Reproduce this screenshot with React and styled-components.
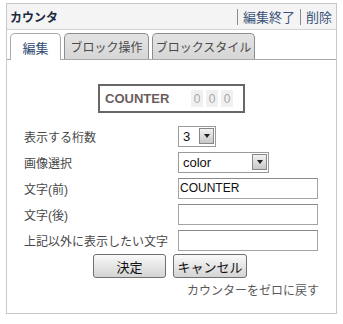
import React from "react";
import styled, { createGlobalStyle } from "styled-components";

const GlobalStyle = createGlobalStyle`
  body {
    margin: 0;
    background: #fff;
    font-family: "Liberation Sans", "Noto Sans CJK JP", sans-serif;
  }
`;

const Block = styled.div`
  margin: 3px 0 0 6px;
  width: 331px;
  height: 311px;
  box-sizing: border-box;
  border: 1px solid #c8c8c8;
  background: #fff;
  display: flex;
  flex-direction: column;
`;

const Header = styled.div`
  height: 26px;
  box-sizing: border-box;
  background: #f4f4f4;
  border-bottom: 1px solid #d4d4d4;
  display: flex;
  align-items: center;
  justify-content: space-between;
  padding: 0 4px 0 3px;
`;

const Title = styled.div`
  font-size: 12px;
  font-weight: bold;
  color: #1a2a40;
`;

const Links = styled.div`
  display: flex;
  align-items: center;
  font-size: 13px;
  color: #3a5378;
`;

const Sep = styled.span`
  display: inline-block;
  width: 1px;
  height: 16px;
  background: #8a8a8a;
  margin: 0 5px;
`;

const TabBar = styled.div`
  display: flex;
  align-items: flex-end;
  gap: 3px;
  margin-top: 3px;
  padding-left: 3px;
  height: 26px;
  border-bottom: 1px solid #a8a8a8;
`;

const Tab = styled.div`
  width: ${(p) => p.$w}px;
  height: ${(p) => (p.$active ? "27px" : "26px")};
  box-sizing: border-box;
  border: 1px solid ${(p) => (p.$active ? "#aaa" : "#8e8e8e")};
  border-bottom: none;
  border-radius: 5px 5px 0 0;
  background: ${(p) => (p.$active ? "#fff" : "linear-gradient(#e4e4e4, #d6d6d6)")};
  color: ${(p) => (p.$active ? "#2f4a70" : "#4a4a4a")};
  font-size: ${(p) => (p.$active ? "13px" : "12px")};
  white-space: nowrap;
  display: flex;
  align-items: center;
  justify-content: center;
  margin-bottom: ${(p) => (p.$active ? "-1px" : "0")};
`;

const Panel = styled.div`
  flex: 1;
  display: flex;
  flex-direction: column;
  padding-top: 24px;
`;

const Preview = styled.div`
  align-self: center;
  width: 147px;
  height: 29px;
  box-sizing: border-box;
  border: 2px solid #6a6666;
  display: flex;
  align-items: center;
  justify-content: space-between;
  padding: 0 10px 0 5px;
`;

const PreviewText = styled.span`
  font-size: 13px;
  font-weight: bold;
  color: #6b5d5d;
`;

const Digits = styled.div`
  display: flex;
  gap: 3px;
`;

const Digit = styled.span`
  width: 12px;
  height: 17px;
  background: #f0f0f0;
  color: #a8a8a8;
  font-size: 12px;
  display: flex;
  align-items: center;
  justify-content: center;
`;

const Form = styled.div`
  margin-top: 10px;
  display: grid;
  grid-template-columns: 154px 140px;
  grid-auto-rows: 26px;
  padding-left: 17px;
  align-items: center;
`;

const Label = styled.div`
  font-size: 12px;
  color: #484848;
`;

const SelectBox = styled.div`
  width: ${(p) => p.$w}px;
  height: 21px;
  box-sizing: border-box;
  border: 1px solid #9a9a9a;
  background: #fff;
  display: flex;
  align-items: center;
  justify-content: space-between;
  padding: 0 1px 0 4px;
  font-size: 13px;
  color: #111;
`;

const ArrowBtn = styled.span`
  width: 15px;
  height: 16px;
  box-sizing: border-box;
  border: 1px solid #888;
  background: linear-gradient(#f2f2f2, #c8c8c8);
  display: flex;
  align-items: center;
  justify-content: center;
  &::after {
    content: "";
    border-left: 3px solid transparent;
    border-right: 3px solid transparent;
    border-top: 4px solid #222;
  }
`;

const Input = styled.div`
  width: 140px;
  height: 21px;
  box-sizing: border-box;
  border: 1px solid #a4a4a4;
  border-top-color: #8a8a8a;
  background: #fff;
  display: flex;
  align-items: center;
  padding-left: 1px;
  font-size: 12px;
  color: #111;
`;

const Buttons = styled.div`
  margin-top: 1px;
  display: flex;
  gap: 7px;
  padding-left: 86px;
`;

const Button = styled.div`
  width: ${(p) => p.$w}px;
  height: 24px;
  box-sizing: border-box;
  border: 1px solid #707070;
  border-radius: 3px;
  background: linear-gradient(#fafafa, #e6e6e6 50%, #d4d4d4);
  font-size: 13px;
  color: #111;
  display: flex;
  align-items: center;
  justify-content: center;
`;

const Reset = styled.div`
  align-self: flex-end;
  margin: 3px 17px 0 0;
  font-size: 12px;
  color: #5a5a5a;
`;

const Select = ({ value, width }) => (
  <SelectBox $w={width}>
    <span>{value}</span>
    <ArrowBtn />
  </SelectBox>
);

export default function App() {
  return (
    <>
      <GlobalStyle />
      <Block>
        <Header>
          <Title>カウンタ</Title>
          <Links>
            <Sep />
            <span>編集終了</span>
            <Sep />
            <span>削除</span>
          </Links>
        </Header>
        <TabBar>
          <Tab $w={51} $active>編集</Tab>
          <Tab $w={85}>ブロック操作</Tab>
          <Tab $w={103}>ブロックスタイル</Tab>
        </TabBar>
        <Panel>
          <Preview>
            <PreviewText>COUNTER</PreviewText>
            <Digits>
              <Digit>0</Digit>
              <Digit>0</Digit>
              <Digit>0</Digit>
            </Digits>
          </Preview>
          <Form>
            <Label>表示する桁数</Label>
            <Select value="3" width={38} />
            <Label>画像選択</Label>
            <Select value="color" width={91} />
            <Label>文字(前)</Label>
            <Input>COUNTER</Input>
            <Label>文字(後)</Label>
            <Input />
            <Label>上記以外に表示したい文字</Label>
            <Input />
          </Form>
          <Buttons>
            <Button $w={73}>決定</Button>
            <Button $w={74}>キャンセル</Button>
          </Buttons>
          <Reset>カウンターをゼロに戻す</Reset>
        </Panel>
      </Block>
    </>
  );
}
